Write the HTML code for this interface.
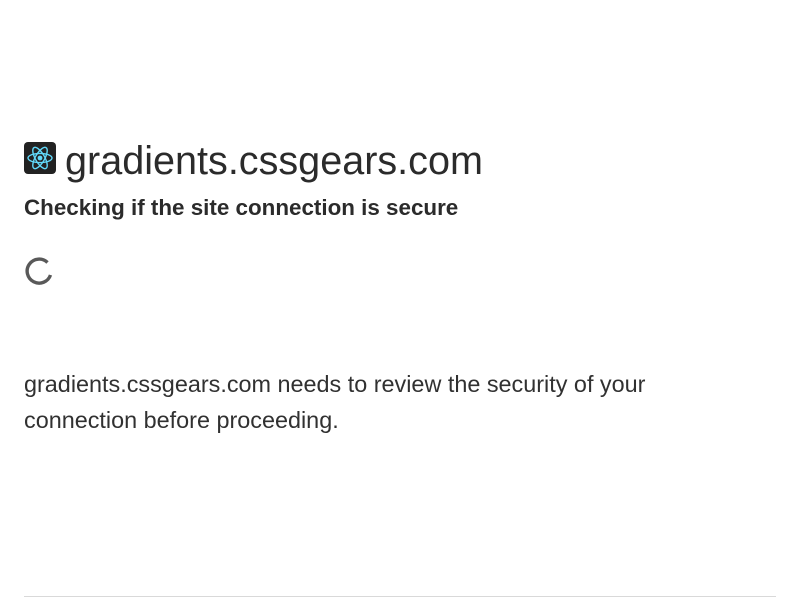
<!DOCTYPE html>
<html><head><style>
body{margin:0;background:#fff;font-family:"Liberation Sans",sans-serif;color:#313131;}
h1{position:absolute;left:65px;top:138px;margin:0;font-size:39.6px;font-weight:500;line-height:46px;color:#2b2b2b;}
h2{position:absolute;left:24px;top:194px;margin:0;font-size:22.4px;font-weight:bold;line-height:28px;color:#2b2b2b;}
p{position:absolute;left:24px;top:366px;margin:0;font-size:23.4px;line-height:36px;color:#313131;width:660px;}
.hr{position:absolute;left:24px;top:596px;width:752px;height:1px;background:#d9d9d9;}
</style></head><body>
<svg style="position:absolute;left:24px;top:142px" width="32" height="32" viewBox="0 0 32 32">
<rect width="32" height="32" rx="4" fill="#222"/>
<g fill="none" stroke="#61dafb" stroke-width="1.4">
<ellipse cx="16" cy="16" rx="12" ry="4.6"/>
<ellipse cx="16" cy="16" rx="12" ry="4.6" transform="rotate(60 16 16)"/>
<ellipse cx="16" cy="16" rx="12" ry="4.6" transform="rotate(120 16 16)"/>
</g><circle cx="16" cy="16" r="2.4" fill="#61dafb"/></svg>
<h1>gradients.cssgears.com</h1>
<h2>Checking if the site connection is secure</h2>
<svg style="position:absolute;left:24px;top:256px" width="30" height="30" viewBox="0 0 30 30">
<path d="M23.5 6.5 A12 12 0 1 0 26.5 19" fill="none" stroke="#595959" stroke-width="3.4"/></svg>
<p>gradients.cssgears.com needs to review the security of your connection before proceeding.</p>
<div class="hr"></div>
</body></html>
